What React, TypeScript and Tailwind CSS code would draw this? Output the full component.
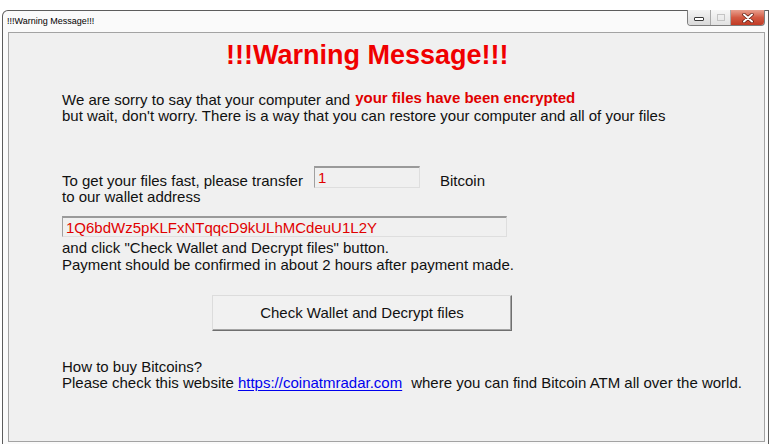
export default function App() {
  return (
    <div className="h-[444px] w-[770px] overflow-hidden bg-white font-['Liberation_Sans',Arial,sans-serif] text-[#111]">
      <div className="ml-[2px] mt-[10px] flex h-[434px] w-[767px] flex-col rounded-tl-[6px] border-l border-r border-t border-[#5c5c5c] bg-[#fafafa]">
        {/* title bar */}
        <div className="flex h-[21px]">
          <span className="ml-[4px] self-center text-[9px] leading-[11px] text-black">!!!Warning Message!!!</span>
          <div className="ml-auto mr-[3px] -mt-px flex h-[16px] self-start overflow-hidden rounded-b-[4px] border border-t-0 border-[#7d7d7d]">
            <div className="flex w-[23px] items-center justify-center border-r border-[#a8a8a8] bg-gradient-to-b from-[#f4f4f4] to-[#d9d9d9]">
              <span className="mt-[2px] h-[4px] w-[10px] rounded-[1px] border border-[#3a3a3a] bg-white" />
            </div>
            <div className="flex w-[20px] items-center justify-center border-r border-[#a8a8a8] bg-gradient-to-b from-[#f7f7f7] to-[#e2e2e2]">
              <span className="h-[7px] w-[8px] border border-[#c4c4c4]" />
            </div>
            <div className="flex w-[33px] items-center justify-center bg-gradient-to-b from-[#e7a08f] via-[#d35a43] to-[#c03a24]">
              <svg width="12" height="10" viewBox="0 0 12 10">
                <path d="M2 1.5 L10 8.5 M10 1.5 L2 8.5" stroke="#5a1a10" strokeWidth="3.4" strokeLinecap="round" />
                <path d="M2 1.5 L10 8.5 M10 1.5 L2 8.5" stroke="#ffffff" strokeWidth="2" strokeLinecap="round" />
              </svg>
            </div>
          </div>
        </div>

        {/* client area */}
        <div className="ml-[5px] mr-[3px] h-[410px] border border-[#a3a3a3] bg-[#f0f0f0]">
          <h1 className="mt-[7px] pl-[217px] text-[27px] font-bold leading-[31px] text-[#f00000]">
            !!!Warning Message!!!
          </h1>

          <div className="mt-[19px] pl-[53px] text-[15px] leading-[16px]">
            <p>
              We are sorry to say that your computer and
              <span className="ml-[5px] align-[2px] font-bold text-[#e00000]">your files have been encrypted</span>
            </p>
            <p>but wait, don't worry. There is a way that you can restore your computer and all of your files</p>
          </div>

          <div className="mt-[42px] flex items-start pl-[53px] text-[15px] leading-[16px]">
            <p className="w-[252px] pt-[7px]">
              To get your files fast, please transfer
              <br />
              to our wallet address
            </p>
            <div className="h-[22px] w-[106px] border border-[#a0a0a0] border-b-[#dedede] border-r-[#dedede] border-t-2 border-t-[#9a9a9a] pl-[3px] pt-[2px] text-[#e00000]">
              1
            </div>
            <span className="ml-[20px] pt-[7px]">Bitcoin</span>
          </div>

          <div className="ml-[53px] mt-[11px] h-[21px] w-[445px] border border-[#a0a0a0] border-b-[#dedede] border-r-[#dedede] border-t-2 border-t-[#9a9a9a] pl-[3px] pt-[2px] text-[15px] leading-[16px] text-[#e00000]">
            1Q6bdWz5pKLFxNTqqcD9kULhMCdeuU1L2Y
          </div>

          <div className="mt-[2px] pl-[53px] text-[15px] leading-[17px]">
            <p>and click "Check Wallet and Decrypt files" button.</p>
            <p>Payment should be confirmed in about 2 hours after payment made.</p>
          </div>

          <button className="ml-[203px] mt-[22px] flex h-[36px] w-[300px] items-center justify-center border border-[#dcdcdc] border-b-[#6f6f6f] border-r-[#6f6f6f] bg-[#f1f1f1] text-[15px] text-[#111] shadow-[inset_-1px_-1px_0_#a5a5a5]">
            Check Wallet and Decrypt files
          </button>

          <div className="mt-[28px] pl-[53px] text-[15px] leading-[16px]">
            <p>How to buy Bitcoins?</p>
            <p>
              Please check this website{" "}
              <a className="text-[#0000ee] underline underline-offset-[2px]">https://coinatmradar.com</a>
              <span className="ml-[9px]">where you can find Bitcoin ATM all over the world.</span>
            </p>
          </div>
        </div>
      </div>
    </div>
  );
}
